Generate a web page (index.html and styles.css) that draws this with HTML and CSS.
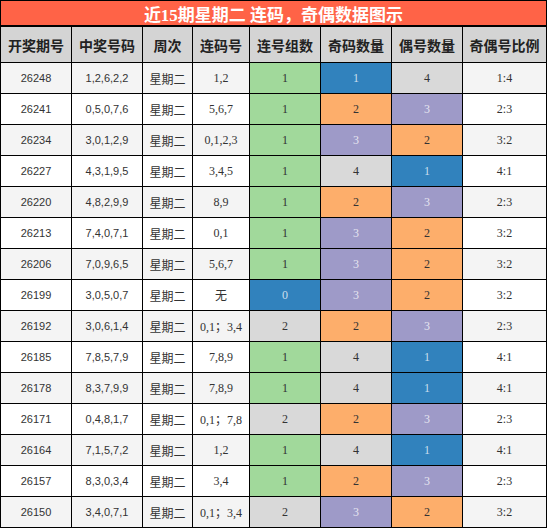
FILE: index.html
```html
<!DOCTYPE html>
<html lang="zh-CN">
<head>
    <meta charset="UTF-8">
    <title>近15期星期二 连码，奇偶数据图示</title>
    <link rel="stylesheet" href="styles.css">
</head>
<body>
    <div class="chart">
        <div class="title">近15期星期二 连码，奇偶数据图示</div>

        <div class="row head">
            <div class="cell">开奖期号</div>
            <div class="cell">中奖号码</div>
            <div class="cell">周次</div>
            <div class="cell">连码号</div>
            <div class="cell">连号组数</div>
            <div class="cell">奇码数量</div>
            <div class="cell">偶号数量</div>
            <div class="cell">奇偶号比例</div>
        </div>

        <div class="row odd">
            <div class="cell sans">26248</div><div class="cell sans">1,2,6,2,2</div><div class="cell cjk">星期二</div><div class="cell">1,2</div>
            <div class="cell green">1</div><div class="cell blue">1</div><div class="cell gray">4</div><div class="cell">1:4</div>
        </div>
        <div class="row">
            <div class="cell sans">26241</div><div class="cell sans">0,5,0,7,6</div><div class="cell cjk">星期二</div><div class="cell">5,6,7</div>
            <div class="cell green">1</div><div class="cell orange">2</div><div class="cell purple">3</div><div class="cell">2:3</div>
        </div>
        <div class="row odd">
            <div class="cell sans">26234</div><div class="cell sans">3,0,1,2,9</div><div class="cell cjk">星期二</div><div class="cell">0,1,2,3</div>
            <div class="cell green">1</div><div class="cell purple">3</div><div class="cell orange">2</div><div class="cell">3:2</div>
        </div>
        <div class="row">
            <div class="cell sans">26227</div><div class="cell sans">4,3,1,9,5</div><div class="cell cjk">星期二</div><div class="cell">3,4,5</div>
            <div class="cell green">1</div><div class="cell gray">4</div><div class="cell blue">1</div><div class="cell">4:1</div>
        </div>
        <div class="row odd">
            <div class="cell sans">26220</div><div class="cell sans">4,8,2,9,9</div><div class="cell cjk">星期二</div><div class="cell">8,9</div>
            <div class="cell green">1</div><div class="cell orange">2</div><div class="cell purple">3</div><div class="cell">2:3</div>
        </div>
        <div class="row">
            <div class="cell sans">26213</div><div class="cell sans">7,4,0,7,1</div><div class="cell cjk">星期二</div><div class="cell">0,1</div>
            <div class="cell green">1</div><div class="cell purple">3</div><div class="cell orange">2</div><div class="cell">3:2</div>
        </div>
        <div class="row odd">
            <div class="cell sans">26206</div><div class="cell sans">7,0,9,6,5</div><div class="cell cjk">星期二</div><div class="cell">5,6,7</div>
            <div class="cell green">1</div><div class="cell purple">3</div><div class="cell orange">2</div><div class="cell">3:2</div>
        </div>
        <div class="row">
            <div class="cell sans">26199</div><div class="cell sans">3,0,5,0,7</div><div class="cell cjk">星期二</div><div class="cell">无</div>
            <div class="cell blue">0</div><div class="cell purple">3</div><div class="cell orange">2</div><div class="cell">3:2</div>
        </div>
        <div class="row odd">
            <div class="cell sans">26192</div><div class="cell sans">3,0,6,1,4</div><div class="cell cjk">星期二</div><div class="cell">0,1；3,4</div>
            <div class="cell gray">2</div><div class="cell orange">2</div><div class="cell purple">3</div><div class="cell">2:3</div>
        </div>
        <div class="row">
            <div class="cell sans">26185</div><div class="cell sans">7,8,5,7,9</div><div class="cell cjk">星期二</div><div class="cell">7,8,9</div>
            <div class="cell green">1</div><div class="cell gray">4</div><div class="cell blue">1</div><div class="cell">4:1</div>
        </div>
        <div class="row odd">
            <div class="cell sans">26178</div><div class="cell sans">8,3,7,9,9</div><div class="cell cjk">星期二</div><div class="cell">7,8,9</div>
            <div class="cell green">1</div><div class="cell gray">4</div><div class="cell blue">1</div><div class="cell">4:1</div>
        </div>
        <div class="row">
            <div class="cell sans">26171</div><div class="cell sans">0,4,8,1,7</div><div class="cell cjk">星期二</div><div class="cell">0,1；7,8</div>
            <div class="cell gray">2</div><div class="cell orange">2</div><div class="cell purple">3</div><div class="cell">2:3</div>
        </div>
        <div class="row odd">
            <div class="cell sans">26164</div><div class="cell sans">7,1,5,7,2</div><div class="cell cjk">星期二</div><div class="cell">1,2</div>
            <div class="cell green">1</div><div class="cell gray">4</div><div class="cell blue">1</div><div class="cell">4:1</div>
        </div>
        <div class="row">
            <div class="cell sans">26157</div><div class="cell sans">8,3,0,3,4</div><div class="cell cjk">星期二</div><div class="cell">3,4</div>
            <div class="cell green">1</div><div class="cell orange">2</div><div class="cell purple">3</div><div class="cell">2:3</div>
        </div>
        <div class="row odd">
            <div class="cell sans">26150</div><div class="cell sans">3,4,0,7,1</div><div class="cell cjk">星期二</div><div class="cell">0,1；3,4</div>
            <div class="cell gray">2</div><div class="cell purple">3</div><div class="cell orange">2</div><div class="cell">3:2</div>
        </div>
    </div>
</body>
</html>
```

FILE: styles.css
```css
body {
    margin: 0;
    background-color: #fff;
}
.chart {
    display: grid;
    grid-template-columns: 70px 70px 49px 56px 70px 70px 70px 83px;
    grid-template-rows: 25px 35px repeat(15, 30px);
    gap: 1px;
    width: 547px;
    box-sizing: border-box;
    padding: 1px;
    background-color: #000;
    font-family: "Liberation Serif", "Noto Sans CJK SC", serif;
    font-size: 12px;
    color: #333;
}
.title {
    grid-column: 1 / -1;
    margin-bottom: 1px;
    background-color: #FF6347;
    color: #fff;
    font-size: 17px;
    font-weight: bold;
    display: flex;
    align-items: center;
    justify-content: center;
}
.row {
    display: contents;
}
.cell {
    display: flex;
    align-items: center;
    justify-content: center;
    background-color: #fff;
    white-space: nowrap;
}
.row.odd .cell {
    background-color: #F4F4F4;
}
.row.head .cell {
    background-color: #D4D4D4;
    font-family: "Noto Sans CJK SC", sans-serif;
    font-size: 14px;
    font-weight: bold;
    color: #222;
}
.sans {
    font-family: "Liberation Sans", sans-serif;
    font-size: 11px;
}
.cjk {
    font-family: "Noto Sans CJK SC", sans-serif;
}
.row .cell.green {
    background-color: #A1D99B;
}
.row .cell.blue {
    background-color: #3182BD;
    color: rgba(255, 255, 255, 0.75);
}
.row .cell.orange {
    background-color: #FDAE6B;
}
.row .cell.purple {
    background-color: #9E9AC8;
    color: rgba(255, 255, 255, 0.75);
}
.row .cell.gray {
    background-color: #D9D9D9;
}
```
